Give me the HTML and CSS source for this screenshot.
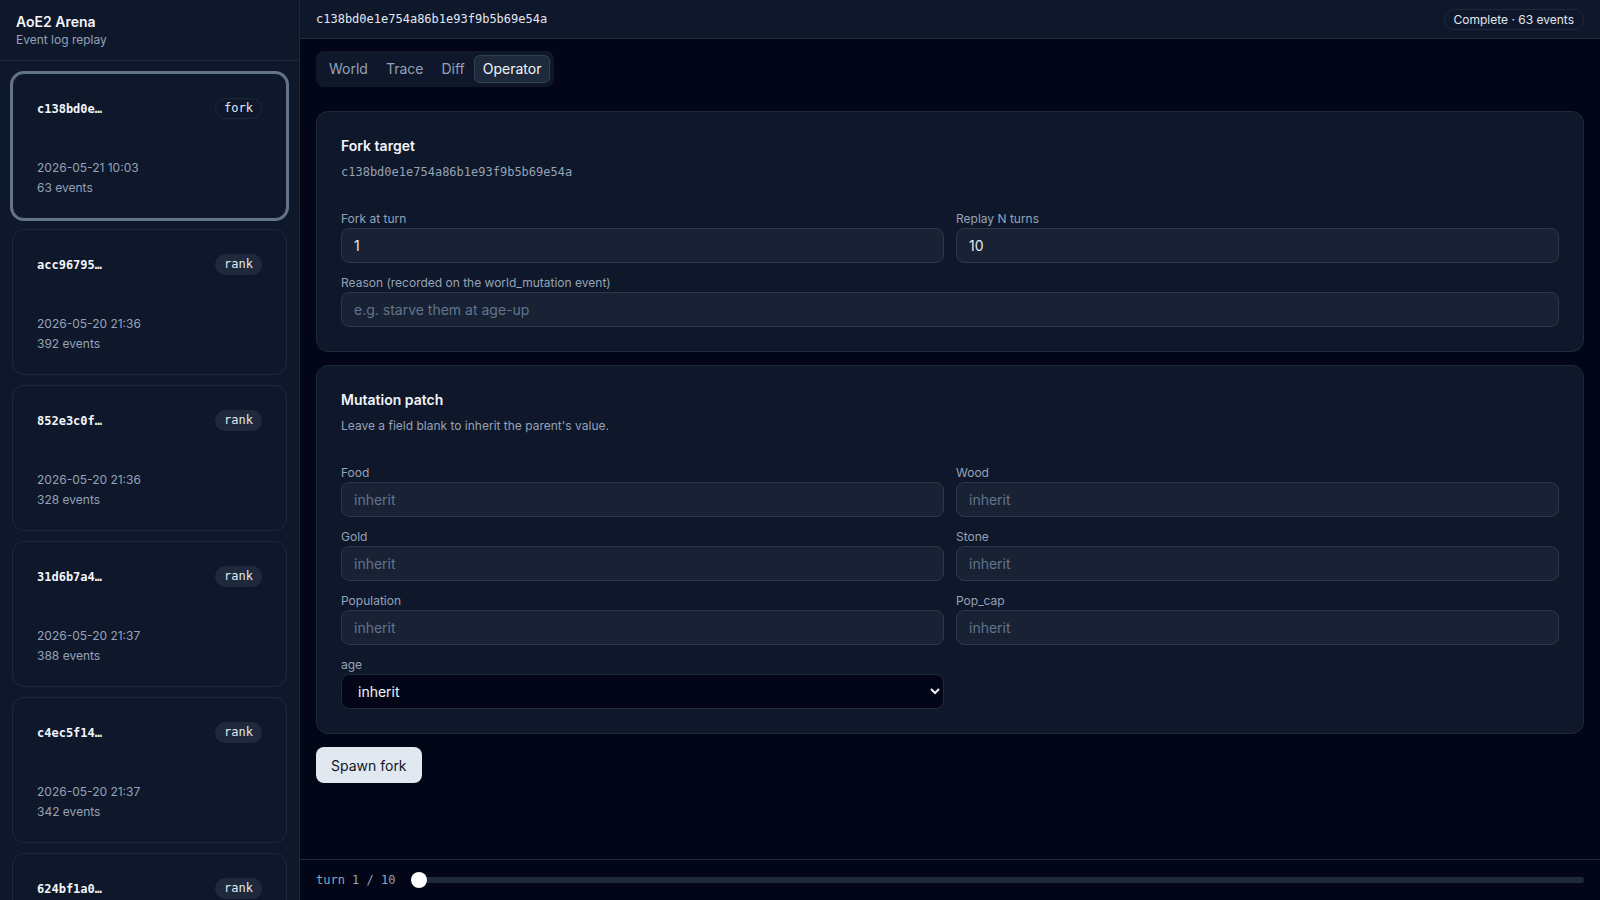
FILE: index.html
```html
<!DOCTYPE html>
<html lang="en">
<head>
    <meta charset="UTF-8">
    <meta name="viewport" content="width=device-width, initial-scale=1.0">
    <title>AoE2 Arena - Event log replay</title>
    <link rel="stylesheet" href="styles.css">
</head>
<body>
    <div class="app">
        <!-- Run list -->
        <aside class="sidebar">
            <div class="brand">
                <div class="brand-title">AoE2 Arena</div>
                <div class="brand-sub">Event log replay</div>
            </div>

            <div class="run-list">
                <div class="run selected">
                    <div class="run-head">
                        <span class="run-id">c138bd0e…</span>
                        <span class="tag tag-fork">fork</span>
                    </div>
                    <div class="run-meta">
                        <div>2026-05-21 10:03</div>
                        <div>63 events</div>
                    </div>
                </div>
                <div class="run">
                    <div class="run-head">
                        <span class="run-id">acc96795…</span>
                        <span class="tag">rank</span>
                    </div>
                    <div class="run-meta">
                        <div>2026-05-20 21:36</div>
                        <div>392 events</div>
                    </div>
                </div>
                <div class="run">
                    <div class="run-head">
                        <span class="run-id">852e3c0f…</span>
                        <span class="tag">rank</span>
                    </div>
                    <div class="run-meta">
                        <div>2026-05-20 21:36</div>
                        <div>328 events</div>
                    </div>
                </div>
                <div class="run">
                    <div class="run-head">
                        <span class="run-id">31d6b7a4…</span>
                        <span class="tag">rank</span>
                    </div>
                    <div class="run-meta">
                        <div>2026-05-20 21:37</div>
                        <div>388 events</div>
                    </div>
                </div>
                <div class="run">
                    <div class="run-head">
                        <span class="run-id">c4ec5f14…</span>
                        <span class="tag">rank</span>
                    </div>
                    <div class="run-meta">
                        <div>2026-05-20 21:37</div>
                        <div>342 events</div>
                    </div>
                </div>
                <div class="run">
                    <div class="run-head">
                        <span class="run-id">624bf1a0…</span>
                        <span class="tag">rank</span>
                    </div>
                    <div class="run-meta">
                        <div>2026-05-20 21:38</div>
                        <div>356 events</div>
                    </div>
                </div>
            </div>
        </aside>

        <main class="main">
            <header class="topbar">
                <span class="run-hash">c138bd0e1e754a86b1e93f9b5b69e54a</span>
                <span class="status">Complete · 63 events</span>
            </header>

            <section class="content">
                <nav class="tabs">
                    <button class="tab">World</button>
                    <button class="tab">Trace</button>
                    <button class="tab">Diff</button>
                    <button class="tab active">Operator</button>
                </nav>

                <div class="panel">
                    <h2 class="panel-title">Fork target</h2>
                    <div class="panel-sub mono">c138bd0e1e754a86b1e93f9b5b69e54a</div>

                    <div class="fields">
                        <div class="field">
                            <label for="forkTurn">Fork at turn</label>
                            <input type="text" id="forkTurn" value="1">
                        </div>
                        <div class="field">
                            <label for="replayTurns">Replay N turns</label>
                            <input type="text" id="replayTurns" value="10">
                        </div>
                        <div class="field wide">
                            <label for="reason">Reason (recorded on the world_mutation event)</label>
                            <input type="text" id="reason" placeholder="e.g. starve them at age-up">
                        </div>
                    </div>
                </div>

                <div class="panel">
                    <h2 class="panel-title">Mutation patch</h2>
                    <div class="panel-sub">Leave a field blank to inherit the parent's value.</div>

                    <div class="fields">
                        <div class="field">
                            <label for="food">Food</label>
                            <input type="text" id="food" placeholder="inherit">
                        </div>
                        <div class="field">
                            <label for="wood">Wood</label>
                            <input type="text" id="wood" placeholder="inherit">
                        </div>
                        <div class="field">
                            <label for="gold">Gold</label>
                            <input type="text" id="gold" placeholder="inherit">
                        </div>
                        <div class="field">
                            <label for="stone">Stone</label>
                            <input type="text" id="stone" placeholder="inherit">
                        </div>
                        <div class="field">
                            <label for="population">Population</label>
                            <input type="text" id="population" placeholder="inherit">
                        </div>
                        <div class="field">
                            <label for="popCap">Pop_cap</label>
                            <input type="text" id="popCap" placeholder="inherit">
                        </div>
                        <div class="field">
                            <label for="age">age</label>
                            <select id="age">
                                <option>inherit</option>
                                <option>dark</option>
                                <option>feudal</option>
                                <option>castle</option>
                                <option>imperial</option>
                            </select>
                        </div>
                    </div>
                </div>

                <div>
                    <button class="primary">Spawn fork</button>
                </div>
            </section>

            <footer class="scrubber">
                <span class="turn">turn 1 / 10</span>
                <input type="range" class="slider" min="1" max="10" value="1">
            </footer>
        </main>
    </div>
</body>
</html>
```

FILE: styles.css
```css
* {
    box-sizing: border-box;
}

body {
    margin: 0;
    font-family: Inter, 'Noto Sans', sans-serif;
    background-color: #020617;
    color: #e2e8f0;
    overflow: hidden;
}

.mono,
.run-id,
.run-hash,
.tag,
.turn {
    font-family: 'DejaVu Sans Mono', monospace;
}

.app {
    display: flex;
    height: 100vh;
}

/* Sidebar */
.sidebar {
    width: 300px;
    flex: 0 0 300px;
    background-color: #0f172a;
    border-right: 1px solid #1e293b;
    overflow: hidden;
}

.brand {
    padding: 12px 16px;
    border-bottom: 1px solid #1e293b;
}

.brand-title {
    font-size: 14px;
    line-height: 20px;
    font-weight: 600;
    color: #f1f5f9;
}

.brand-sub {
    font-size: 12px;
    line-height: 16px;
    color: #94a3b8;
}

.run-list {
    display: flex;
    flex-direction: column;
    gap: 10px;
    padding: 12px;
}

.run {
    height: 146px;
    flex: 0 0 146px;
    padding: 24px 24px 20px;
    border: 1px solid #1e293b;
    border-radius: 12px;
    background-color: #0f172a;
}

.run.selected {
    border-color: #64748b;
    box-shadow: 0 0 0 2px #64748b;
}

.run-head {
    display: flex;
    justify-content: space-between;
    align-items: center;
    height: 21px;
}

.run-id {
    font-size: 12px;
    font-weight: bold;
    color: #f1f5f9;
}

.tag {
    font-size: 12px;
    line-height: 15px;
    padding: 2px 8px;
    border: 1px solid transparent;
    border-radius: 999px;
    background-color: #1e293b;
    color: #e2e8f0;
}

.tag-fork {
    background-color: transparent;
    border-color: #1e293b;
}

.run-meta {
    margin-top: 39px;
    font-size: 12px;
    line-height: 20px;
    color: #94a3b8;
}

/* Main column */
.main {
    flex: 1;
    display: flex;
    flex-direction: column;
    min-width: 0;
}

.topbar {
    height: 39px;
    flex: 0 0 39px;
    display: flex;
    align-items: center;
    justify-content: space-between;
    padding: 0 16px;
    background-color: #0f172a;
    border-bottom: 1px solid #1e293b;
}

.run-hash {
    font-size: 12px;
    color: #e2e8f0;
}

.status {
    font-size: 12px;
    line-height: 15px;
    padding: 2px 9px;
    border: 1px solid #1e293b;
    border-radius: 999px;
    color: #e2e8f0;
}

.content {
    flex: 1;
    overflow: auto;
    padding: 12px 16px;
    display: flex;
    flex-direction: column;
    gap: 13px;
}

.tabs {
    align-self: flex-start;
    display: inline-flex;
    padding: 4px;
    margin-bottom: 11px;
    border-radius: 8px;
    background-color: #0f172a;
}

.tab {
    font-family: inherit;
    font-size: 14px;
    line-height: 20px;
    padding: 3px 8px;
    border: 1px solid transparent;
    border-radius: 6px;
    background: none;
    color: #94a3b8;
    cursor: pointer;
}

.tab.active {
    background-color: #1e293b;
    border-color: #334155;
    color: #f1f5f9;
}

.panel {
    padding: 24px;
    border: 1px solid #1e293b;
    border-radius: 12px;
    background-color: #0f172a;
}

.panel-title {
    margin: 0;
    font-size: 14px;
    line-height: 20px;
    font-weight: 600;
    color: #f1f5f9;
}

.panel-sub {
    margin-top: 8px;
    font-size: 12px;
    line-height: 16px;
    color: #94a3b8;
}

.fields {
    display: grid;
    grid-template-columns: 1fr 1fr;
    gap: 12px;
    margin-top: 31px;
}

.field.wide {
    grid-column: span 2;
}

.field label {
    display: block;
    margin-bottom: 1px;
    font-size: 12px;
    line-height: 16px;
    color: #94a3b8;
}

.field input,
.field select {
    display: block;
    width: 100%;
    height: 35px;
    padding: 0 12px;
    font-family: inherit;
    font-size: 14px;
    border-radius: 8px;
    outline: none;
}

.field input {
    background-color: #182234;
    border: 1px solid #2c3749;
    color: #e2e8f0;
}

.field input::placeholder {
    color: #64748b;
}

.field select {
    color-scheme: dark;
    background-color: #020617;
    border: 1px solid #1e293b;
    color: #f1f5f9;
}

.primary {
    height: 36px;
    padding: 0 15px;
    font-family: inherit;
    font-size: 14px;
    font-weight: 400;
    border: none;
    border-radius: 8px;
    background-color: #e2e8f0;
    color: #0f172a;
    cursor: pointer;
}

/* Turn scrubber */
.scrubber {
    height: 41px;
    flex: 0 0 41px;
    display: flex;
    align-items: center;
    gap: 16px;
    padding: 0 16px;
    border-top: 1px solid #1e293b;
}

.turn {
    font-size: 12px;
    color: #94a3b8;
}

.slider {
    -webkit-appearance: none;
    appearance: none;
    flex: 1;
    height: 6px;
    margin: 0;
    background-color: #1e293b;
    border-radius: 3px;
    outline: none;
}

.slider::-webkit-slider-thumb {
    -webkit-appearance: none;
    width: 16px;
    height: 16px;
    border-radius: 50%;
    background-color: #fff;
    cursor: pointer;
}
```
